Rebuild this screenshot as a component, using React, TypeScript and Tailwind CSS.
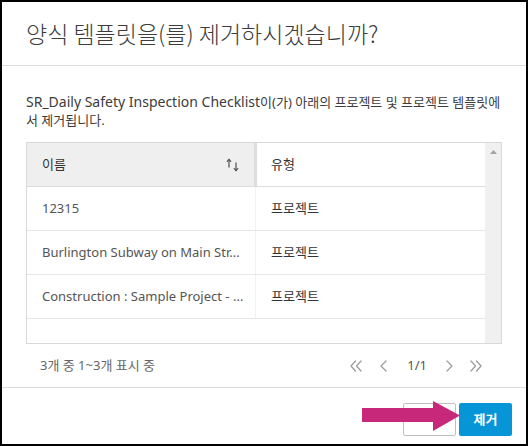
import React from "react";

const rows = [
  { name: "12315", type: "프로젝트" },
  { name: "Burlington Subway on Main Str...", type: "프로젝트" },
  { name: "Construction : Sample Project - ...", type: "프로젝트" },
];

function SortIcon() {
  return (
    <svg width="14" height="14" viewBox="0 0 14 14" fill="none" stroke="#5a5a5a" strokeWidth="1.3" strokeLinecap="round" strokeLinejoin="round">
      <path d="M3 1.5V9" />
      <path d="M1.2 3.4L3 1.5L4.8 3.4" />
      <path d="M10 5V12.5" />
      <path d="M8.2 10.6L10 12.5L11.8 10.6" />
    </svg>
  );
}

function DoubleLeft() {
  return (
    <svg width="12" height="12" viewBox="0 0 12 12" fill="none" stroke="#9a9a9a" strokeWidth="1.2" strokeLinecap="round" strokeLinejoin="round">
      <path d="M5.5 1L1 6L5.5 11" />
      <path d="M11 1L6.5 6L11 11" />
    </svg>
  );
}
function DoubleRight() {
  return (
    <svg width="12" height="12" viewBox="0 0 12 12" fill="none" stroke="#9a9a9a" strokeWidth="1.2" strokeLinecap="round" strokeLinejoin="round">
      <path d="M1 1L5.5 6L1 11" />
      <path d="M6.5 1L11 6L6.5 11" />
    </svg>
  );
}
function Left() {
  return (
    <svg width="7" height="12" viewBox="0 0 7 12" fill="none" stroke="#9a9a9a" strokeWidth="1.2" strokeLinecap="round" strokeLinejoin="round">
      <path d="M6 1L1 6L6 11" />
    </svg>
  );
}
function Right() {
  return (
    <svg width="7" height="12" viewBox="0 0 7 12" fill="none" stroke="#9a9a9a" strokeWidth="1.2" strokeLinecap="round" strokeLinejoin="round">
      <path d="M1 1L6 6L1 11" />
    </svg>
  );
}

export default function App() {
  return (
    <div className="relative w-[528px] h-[446px] bg-black p-[2px] font-['Noto_Sans','Noto_Sans_CJK_KR',sans-serif]">
      <div className="w-[524px] h-[442px] bg-white flex flex-col overflow-hidden">
        {/* Header */}
        <div className="h-[64px] shrink-0 px-[24px] flex items-center border-b border-[#dcdcdc]">
          <h1 className="text-[23px] leading-none font-light text-[#3c3c3c] font-['Noto_Sans_CJK_KR','Noto_Sans',sans-serif]">
            양식 템플릿을(를) 제거하시겠습니까?
          </h1>
        </div>

        {/* Body */}
        <div className="px-[24px] pt-[27px] shrink-0">
          <p className="text-[13px] leading-[18px] text-[#3c3c3c] mb-[13px]">
            <span className="block whitespace-nowrap">
              <span className="text-[14px]">SR_Daily Safety Inspection Checklist</span>이(가) 아래의 프로젝트 및 프로젝트 템플릿에
            </span>
            <span className="block whitespace-nowrap">서 제거됩니다.</span>
          </p>

          {/* Table */}
          <div className="h-[202px] border border-[#d9d9d9] flex">
            <div className="flex-1 flex flex-col">
              <div className="h-[44px] flex border-b border-[#dcdcdc]">
                <div className="w-[227px] bg-[#efefef] pl-[15px] pr-[14px] flex items-center justify-between">
                  <span className="text-[13px] text-[#333]">이름</span>
                  <SortIcon />
                </div>
                <div className="w-[3px] bg-[#dedede]" />
                <div className="flex-1 pl-[14px] flex items-center">
                  <span className="text-[13px] text-[#333]">유형</span>
                </div>
              </div>
              {rows.map((r) => (
                <div key={r.name} className="h-[44px] flex border-b border-[#e6e6e6]">
                  <div className="w-[229px] border-r border-[#f2f2f2] pl-[15px] flex items-center">
                    <span className="text-[13px] text-[#555] whitespace-nowrap">{r.name}</span>
                  </div>
                  <div className="flex-1 pl-[15px] flex items-center">
                    <span className="text-[13px] text-[#333]">{r.type}</span>
                  </div>
                </div>
              ))}
            </div>
            <div className="w-[16px] bg-[#f0f0f0] flex justify-center pt-[7px]">
              <svg width="7" height="4" viewBox="0 0 7 4">
                <path d="M0 4L3.5 0L7 4Z" fill="#a3a3a3" />
              </svg>
            </div>
          </div>

          {/* Pagination row */}
          <div className="h-[43px] flex items-center justify-between pl-[14px] pr-[20px]">
            <span className="text-[13px] text-[#666]">3개 중 1~3개 표시 중</span>
            <div className="flex items-center">
              <DoubleLeft />
              <span className="ml-[18px] flex"><Left /></span>
              <span className="ml-[20px] text-[13px] text-[#555] leading-none">1/1</span>
              <span className="ml-[19px] flex"><Right /></span>
              <span className="ml-[17px] flex"><DoubleRight /></span>
            </div>
          </div>
        </div>

        {/* Footer */}
        <div className="border-t border-[#dcdcdc] pt-[15px] pr-[14px] flex justify-end gap-[3px]">
          <button aria-label="취소" className="w-[53px] h-[33px] border border-[#c0c0c0] rounded-[2px] bg-white" />
          <button className="w-[53px] h-[33px] rounded-[2px] bg-[#0696d7] text-[13px] font-bold text-white">
            제거
          </button>
        </div>
      </div>

      {/* Annotation arrow */}
      <svg className="absolute left-[362px] top-[401px]" width="100" height="31" viewBox="0 0 100 31">
        <rect x="0" y="7" width="72" height="14" fill="#c8287a" />
        <path d="M71 0L98 14.5L71 30Z" fill="#c8287a" />
      </svg>
    </div>
  );
}
